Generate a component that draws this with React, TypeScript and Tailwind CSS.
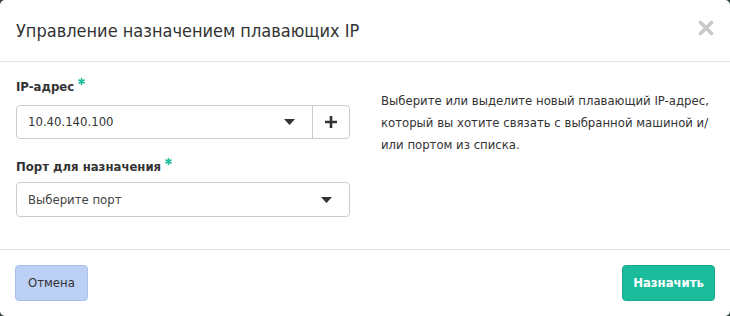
import React from 'react';

const font = { fontFamily: '"DejaVu Sans Condensed", "DejaVu Sans", sans-serif' };

function Caret() {
  return (
    <svg width="11" height="6" viewBox="0 0 11 6" className="shrink-0">
      <path d="M0 0h11L5.5 6z" fill="#333" />
    </svg>
  );
}

function Required() {
  return (
    <svg width="7" height="7" viewBox="0 0 8 8" className="inline-block ml-[4px] relative -top-[6px]">
      <path d="M4 0v8M0.5 2l7 4M7.5 2l-7 4" stroke="#1abc9c" strokeWidth="1.8" />
    </svg>
  );
}

export default function App() {
  return (
    <div className="w-[730px] h-[316px] bg-[#2c3e3a] font-stretch-condensed" style={font}>
      <div className="w-full h-full bg-white rounded-[5px] flex flex-col text-[#333]">
        {/* header */}
        <div className="h-[62px] shrink-0 flex items-center justify-between pl-4 pr-[16px] border-b border-[#e5e5e5]">
          <h1 className="text-[18px] leading-none text-[#333]">Управление назначением плавающих IP</h1>
          <svg width="16" height="16" viewBox="0 0 16 16" className="mb-[5px]">
            <path d="M2.5 2.5l11 11M13.5 2.5l-11 11" stroke="#c8c8c8" strokeWidth="3.6" strokeLinecap="round" />
          </svg>
        </div>

        {/* body */}
        <div className="h-[188px] shrink-0 flex pl-4 pr-4 pt-[15px] border-b border-[#e5e5e5]">
          <div className="w-[334px] flex flex-col">
            <label className="text-[13px] font-bold leading-[20px] mb-[8px] text-[#333]">IP-адрес<Required /></label>
            <div className="h-[34px] flex border border-[#cccccc] rounded-[4px]">
              <div className="flex-1 flex items-center justify-between pl-[11px] pr-[17px] text-[13px]">
                <span>10.40.140.100</span>
                <Caret />
              </div>
              <div className="w-[37px] border-l border-[#cccccc] flex items-center justify-center">
                <svg width="12" height="12" viewBox="0 0 12 12">
                  <path d="M6 0v12M0 6h12" stroke="#333" strokeWidth="2.6" />
                </svg>
              </div>
            </div>
            <label className="text-[13px] font-bold leading-[20px] mt-[18px] mb-[5px] text-[#333]">Порт для назначения<Required /></label>
            <div className="h-[35px] flex items-center justify-between border border-[#cccccc] rounded-[4px] pl-[11px] pr-[17px] text-[13px] text-[#444]">
              <span>Выберите порт</span>
              <Caret />
            </div>
          </div>
          <div className="flex-1 pl-[31px] pt-[13px] text-[13px] leading-[22px] text-[#333]">
            Выберите или выделите новый плавающий IP-адрес, который вы хотите связать с выбранной машиной и/<wbr />или портом из списка.
          </div>
        </div>

        {/* footer */}
        <div className="flex-1 flex items-start justify-between pl-[15px] pr-[15px] pt-[15px]">
          <button className="h-[36px] px-[12px] rounded-[4px] bg-[#bcd0f5] border border-[#a9c0ec] text-[13px] text-[#333]">Отмена</button>
          <button className="h-[36px] px-[10px] rounded-[4px] bg-[#1abc9c] border border-[#17a88b] text-[13px] font-bold text-white">Назначить</button>
        </div>
      </div>
    </div>
  );
}
